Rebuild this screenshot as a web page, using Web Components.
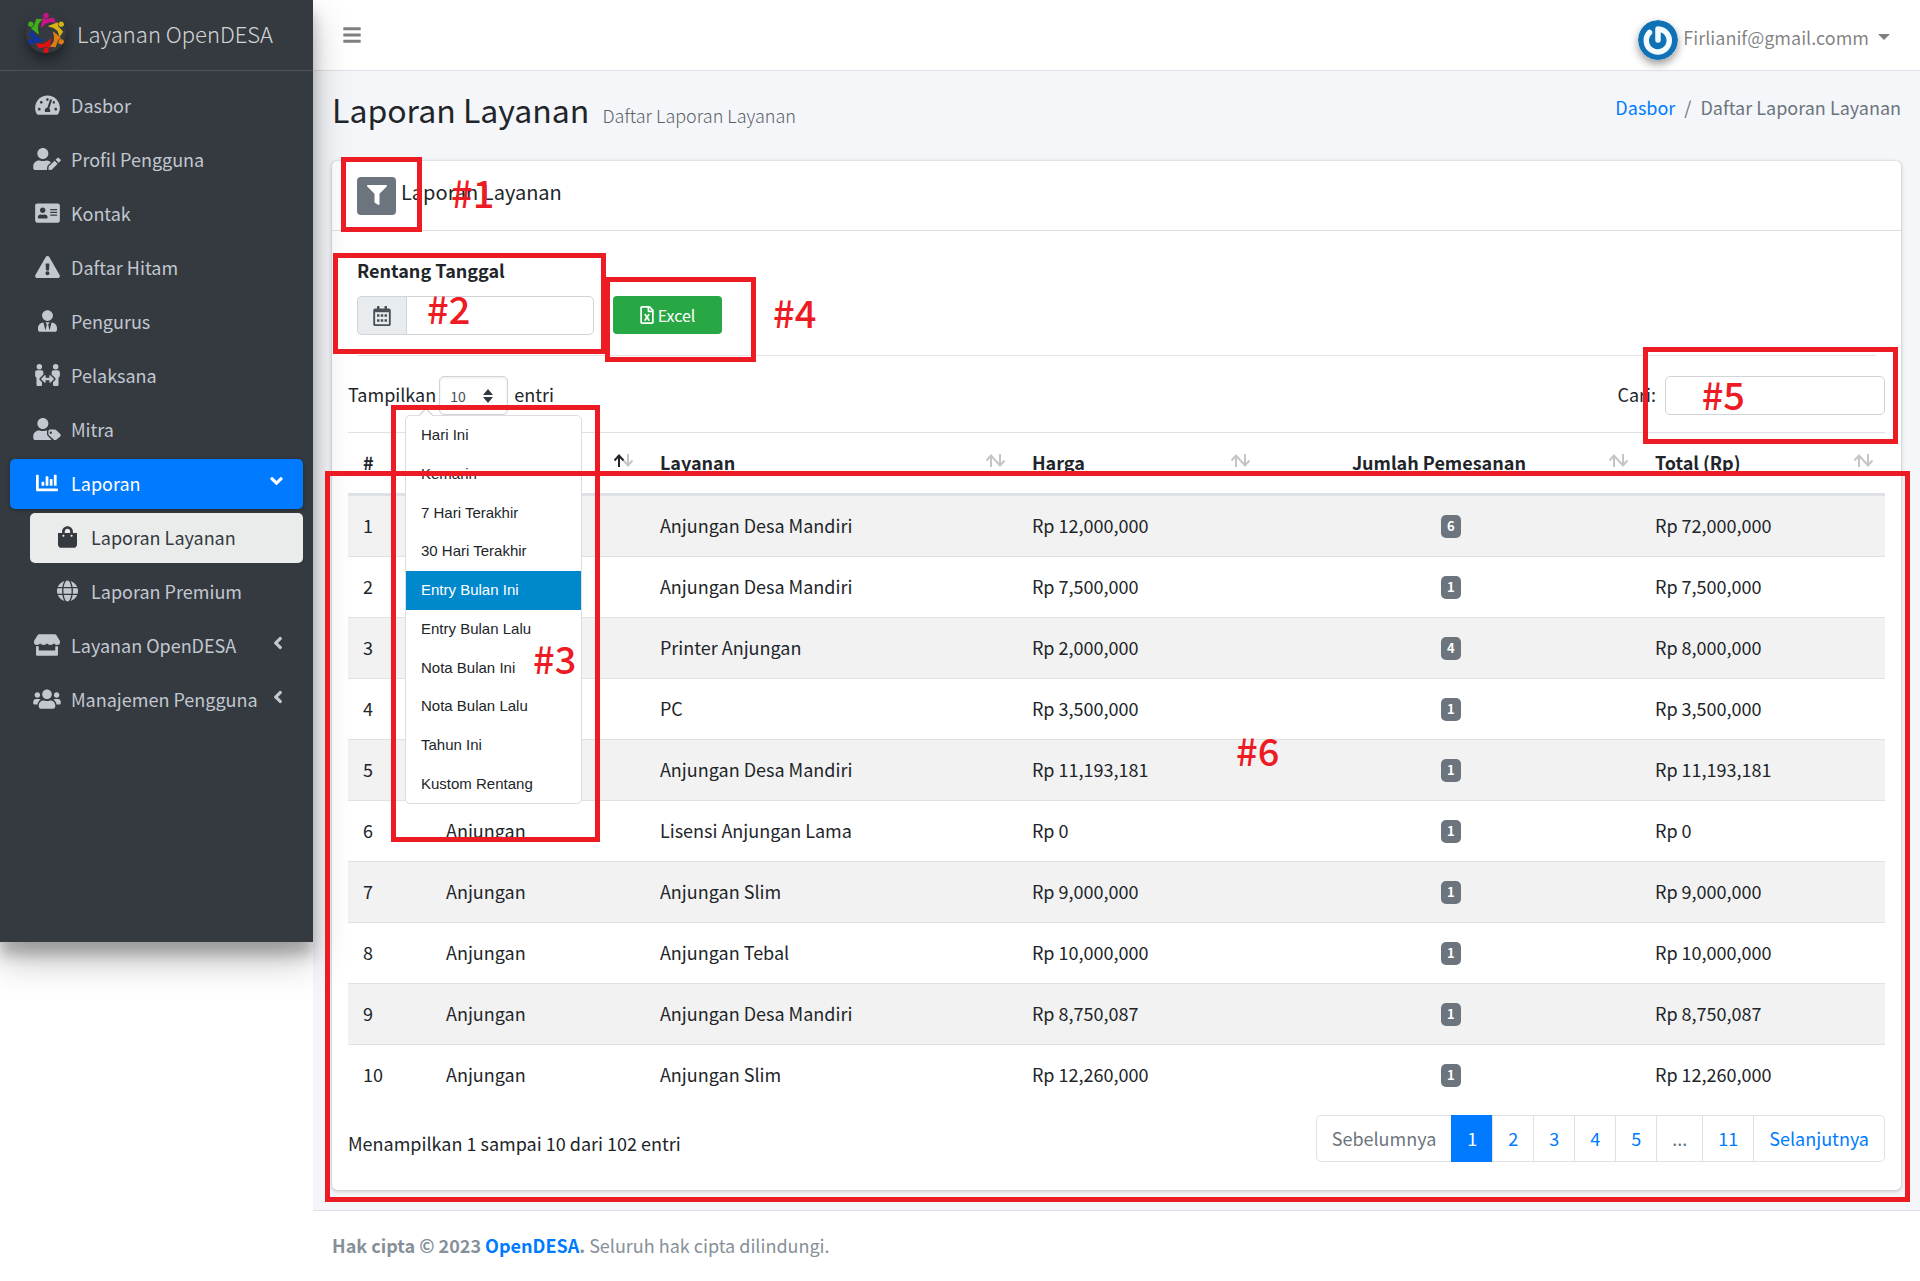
<!DOCTYPE html>
<html lang="id">
<head>
<meta charset="utf-8">
<title>Laporan Layanan</title>
<style>
  html, body { margin: 0; }
  body {
    font: 400 18px/30px "Noto Sans CJK SC", "Noto Sans", sans-serif;
    color: #212529;
    background: #fff;
    position: relative;
    --line: #dee2e6;
    --blue: #007bff;
    --grey: #6c757d;
    --mark: #ed1c24;
  }
</style>
</head>
<body>
<app-shell>
  <side-bar slot="sidebar">
    <nav-item icon="gauge">Dasbor</nav-item>
    <nav-item icon="userEdit">Profil Pengguna</nav-item>
    <nav-item icon="card">Kontak</nav-item>
    <nav-item icon="warning">Daftar Hitam</nav-item>
    <nav-item icon="userTie">Pengurus</nav-item>
    <nav-item icon="people">Pelaksana</nav-item>
    <nav-item icon="userTag">Mitra</nav-item>
    <nav-item icon="chart" active tree="open">Laporan</nav-item>
    <nav-item icon="bag" sub current>Laporan Layanan</nav-item>
    <nav-item icon="globe" sub>Laporan Premium</nav-item>
    <nav-item icon="store" tree="closed">Layanan OpenDESA</nav-item>
    <nav-item icon="users" tree="closed">Manajemen Pengguna</nav-item>
  </side-bar>
  <top-bar slot="top">Firlianif@gmail.comm</top-bar>
  <page-header>
    Laporan Layanan
    <span slot="sub">Daftar Laporan Layanan</span>
    <span slot="crumb">Daftar Laporan Layanan</span>
  </page-header>
  <report-card>
    <range-filter slot="filter"></range-filter>
    <table-tools></table-tools>
    <report-table></report-table>
    <table-foot></table-foot>
  </report-card>
  <page-footer slot="footer"></page-footer>
</app-shell>

<callout-box style="left:341px;top:157px;width:81px;height:75px"></callout-box>
<callout-box style="left:333px;top:253px;width:273px;height:101px"></callout-box>
<callout-box style="left:605px;top:277px;width:151px;height:85px"></callout-box>
<callout-box style="left:391px;top:405px;width:209px;height:437px"></callout-box>
<callout-box style="right:22px;top:347px;width:255px;height:97px"></callout-box>
<callout-box style="left:325px;right:10px;top:471px;height:731px"></callout-box>
<callout-label style="left:451px;top:172px">#1</callout-label>
<callout-label style="left:427px;top:288px">#2</callout-label>
<callout-label style="left:533px;top:638px">#3</callout-label>
<callout-label style="left:773px;top:292px">#4</callout-label>
<callout-label style="right:175px;top:374px">#5</callout-label>
<callout-label style="left:1236px;top:730px">#6</callout-label>

<script>
const user = 'M224 256c70.700 0 128-57.300 128-128S294.700 0 224 0 96 57.300 96 128s57.300 128 128 128z';
const ICONS = {
  gauge: [576, '<path d="M288 32C128.940 32 0 160.940 0 320c0 52.800 14.250 102.260 39.060 144.800 5.610 9.620 16.300 15.200 27.440 15.200h443c11.140 0 21.830-5.580 27.440-15.200C561.750 422.260 576 372.800 576 320c0-159.060-128.940-288-288-288zm0 64c14.710 0 26.580 10.130 30.320 23.650-1.110 2.260-2.640 4.230-3.450 6.670l-9.220 27.670c-5.130 3.490-10.970 6.010-17.640 6.010-17.670 0-32-14.330-32-32S270.330 96 288 96zM96 384c-17.670 0-32-14.330-32-32s14.330-32 32-32 32 14.330 32 32-14.330 32-32 32zm48-160c-17.670 0-32-14.330-32-32s14.330-32 32-32 32 14.330 32 32-14.330 32-32 32zm246.770-72.410l-61.330 184C343.130 347.330 352 364.540 352 384c0 11.720-3.380 22.550-8.880 32H232.880c-5.500-9.450-8.880-20.280-8.880-32 0-33.940 26.500-61.430 59.900-63.590l61.340-184.010c4.170-12.560 17.730-19.450 30.360-15.170 12.570 4.190 19.350 17.790 15.170 30.360zm14.660 57.200l15.520-46.550c3.470-1.290 7.130-2.230 11.050-2.230 17.670 0 32 14.330 32 32s-14.330 32-32 32c-11.380-.01-20.890-6.280-26.570-15.220zM480 384c-17.670 0-32-14.330-32-32s14.330-32 32-32 32 14.330 32 32-14.330 32-32 32z"/>'],
  userEdit: [640, `<path d="${user}m89.600 32h-16.700c-22.200 10.200-46.900 16-72.900 16s-50.600-5.800-72.900-16h-16.700C60.200 288 0 348.200 0 422.400V464c0 26.500 21.500 48 48 48h274.900c-2.400-6.800-3.400-14-2.600-21.300l6.800-60.900 1.200-11.100 7.900-7.900 77.300-77.300c-24.500-27.700-60-45.500-99.900-45.500zm45.300 145.300l-6.800 61c-1.100 10.200 7.500 18.800 17.600 17.600l60.900-6.800 137.900-137.900-71.700-71.700-137.900 137.800zM633 268.900L595.100 231c-9.300-9.300-24.500-9.300-33.800 0l-37.800 37.800-4.100 4.100 71.800 71.700 41.800-41.800c9.300-9.400 9.300-24.500 0-33.900z"/>`],
  card: [576, '<path fill-rule="evenodd" d="M528 32H48C21.500 32 0 53.500 0 80v352c0 26.500 21.500 48 48 48h480c26.500 0 48-21.500 48-48V80c0-26.500-21.500-48-48-48zm-352 96c35.300 0 64 28.700 64 64s-28.700 64-64 64-64-28.700-64-64 28.700-64 64-64zm112 236.800c0 10.600-10 19.200-22.400 19.200H86.400C74 384 64 375.400 64 364.800v-19.200c0-31.800 30.100-57.600 67.200-57.600h5c12.300 5.100 25.700 8 39.800 8s27.600-2.900 39.800-8h5c37.100 0 67.200 25.800 67.200 57.600zM352 288h160v32H352zm0-64h160v32H352zm0-64h160v32H352z"/>'],
  warning: [576, '<path d="M569.517 440.013C587.975 472.007 564.806 512 527.940 512H48.054c-36.937 0-59.999-40.055-41.577-71.987L246.423 23.985c18.467-32.009 64.720-31.951 83.154 0l239.940 416.028zM288 354c-25.405 0-46 20.595-46 46s20.595 46 46 46 46-20.595 46-46-20.595-46-46-46zm-43.673-165.346l7.418 136c.347 6.364 5.609 11.346 11.982 11.346h48.546c6.373 0 11.635-4.982 11.982-11.346l7.418-136c.375-6.874-5.098-12.654-11.982-12.654h-63.383c-6.884 0-12.356 5.780-11.981 12.654z"/>'],
  userTie: [448, `<path d="${user}m95.800 32.600L272 480l-32-136 32-56h-96l32 56-32 136-47.800-191.400C56.900 292 0 350.300 0 422.400V464c0 26.500 21.500 48 48 48h352c26.500 0 48-21.500 48-48v-41.600c0-72.100-56.900-130.400-128.200-133.800z"/>`],
  people: [576, '<circle cx="98" cy="64" r="64"/><circle cx="478" cy="64" r="64"/><path d="M48 144h96c26 0 48 22 48 48v50l-82 82c-14 14-14 34 0 48l50 50v58c0 18-14 32-32 32H64c-18 0-32-14-32-32V320c-19-11-32-30-32-52v-76c0-26 22-48 48-48zM432 144h96c26 0 48 22 48 48v76c0 22-13 41-32 52v160c0 18-14 32-32 32h-64c-18 0-32-14-32-32v-58l50-50c14-14 14-34 0-48l-82-82v-50c0-26 22-48 48-48z"/><path d="M232 258c8 0 13 6 13 14v46h86v-46c0-12 14-19 23-10l78 76c6 6 6 14 0 20l-78 76c-9 9-23 2-23-10v-46h-86v46c0 12-14 19-23 10l-78-76c-6-6-6-14 0-20l78-76c3-3 6-4 10-4z"/>'],
  userTag: [640, `<path d="${user}m89.600 32h-16.700c-22.200 10.200-46.900 16-72.900 16s-50.600-5.800-72.900-16h-16.700C60.200 288 0 348.200 0 422.400V464c0 26.500 21.500 48 48 48h352c9 0 17-3 24-7l-78-78c-14-14-26-35-26-60v-79z"/><path fill-rule="evenodd" d="M392 270h112c12 0 24 5 33 14l91 91c16 16 16 40 0 56l-92 74c-16 14-40 14-56 0l-114-101c-9-9-14-21-14-33V310c0-22 18-40 40-40zm16 46a27 27 0 1 0 .1 54 27 27 0 1 0-.1-54z"/>`],
  chart: [512, '<path d="M332.800 320h38.400c6.400 0 12.800-6.400 12.800-12.800V172.800c0-6.400-6.400-12.800-12.800-12.800h-38.400c-6.400 0-12.800 6.400-12.800 12.800v134.400c0 6.400 6.400 12.800 12.800 12.800zm96 0h38.400c6.400 0 12.800-6.400 12.800-12.800V76.800c0-6.400-6.400-12.800-12.800-12.800h-38.400c-6.400 0-12.800 6.400-12.800 12.800v230.400c0 6.400 6.400 12.800 12.800 12.800zm-288 0h38.400c6.400 0 12.800-6.400 12.800-12.800v-70.400c0-6.400-6.400-12.800-12.800-12.800h-38.400c-6.400 0-12.800 6.400-12.800 12.800v70.400c0 6.400 6.400 12.800 12.800 12.800zm96 0h38.400c6.400 0 12.800-6.400 12.800-12.800V108.800c0-6.400-6.400-12.800-12.800-12.800h-38.400c-6.400 0-12.800 6.400-12.800 12.800v198.400c0 6.400 6.400 12.800 12.800 12.800zM496 384H64V80c0-8.840-7.160-16-16-16H16C7.160 64 0 71.160 0 80v336c0 17.670 14.330 32 32 32h464c8.840 0 16-7.160 16-16v-32c0-8.840-7.160-16-16-16z"/>'],
  bag: [448, '<path d="M352 160v-32C352 57.420 294.579 0 224 0 153.420 0 96 57.420 96 128v32H0v272c0 44.183 35.817 80 80 80h288c44.183 0 80-35.817 80-80V160h-96zm-192-32c0-35.290 28.710-64 64-64s64 28.710 64 64v32H160v-32zm160 120c-13.255 0-24-10.745-24-24s10.745-24 24-24 24 10.745 24 24-10.745 24-24 24zm-192 0c-13.255 0-24-10.745-24-24s10.745-24 24-24 24 10.745 24 24-10.745 24-24 24z"/>'],
  globe: [496, '<path d="M336.500 160C322 70.700 287.800 8 248 8s-74 62.700-88.500 152h177zM152 256c0 22.200 1.200 43.500 3.300 64h185.300c2.100-20.500 3.300-41.800 3.300-64s-1.200-43.500-3.300-64H155.300c-2.100 20.500-3.300 41.800-3.300 64zm324.700-96c-28.600-67.900-86.500-120.400-158-141.600 24.400 33.800 41.200 84.700 50 141.600h108zM177.200 18.400C105.800 39.600 47.800 92.100 19.300 160h108c8.700-56.900 25.500-107.800 49.900-141.600zM487.400 192H372.700c2.100 21 3.300 42.500 3.300 64s-1.200 43-3.300 64h114.600c5.500-20.500 8.600-41.800 8.600-64s-3.100-43.500-8.500-64zM120 256c0-21.500 1.200-43 3.300-64H8.600C3.200 212.500 0 233.800 0 256s3.200 43.500 8.600 64h114.600c-2-21-3.200-42.500-3.200-64zm39.500 96c14.500 89.300 48.700 152 88.500 152s74-62.700 88.500-152h-177zm159.300 141.600c71.400-21.200 129.400-73.700 158-141.600h-108c-8.800 56.900-25.600 107.800-50 141.600zM19.300 352c28.600 67.900 86.500 120.400 158 141.600-24.400-33.800-41.200-84.700-50-141.600h-108z"/>'],
  store: [616, '<path d="M120 0h376c12 0 22 6 28 16l78 124c36 58 4 116-56 116-34 0-58-16-74-40-16 24-44 40-82 40s-66-16-82-40c-16 24-44 40-82 40s-66-16-82-40c-16 24-40 40-74 40C10 256-22 198 14 140L92 16c6-10 16-16 28-16z"/><path d="M48 284c20 6 44 6 64 0v100h392V284c20 6 44 6 64 0v196c0 18-14 32-32 32H80c-18 0-32-14-32-32z"/>'],
  users: [640, '<path d="M96 224c35.300 0 64-28.700 64-64s-28.700-64-64-64-64 28.700-64 64 28.700 64 64 64zm448 0c35.300 0 64-28.700 64-64s-28.700-64-64-64-64 28.700-64 64 28.700 64 64 64zm32 32h-64c-17.600 0-33.500 7.100-45.100 18.600 40.300 22.100 68.900 62 75.100 109.400h66c17.700 0 32-14.300 32-32v-32c0-35.300-28.700-64-64-64zm-256 0c61.900 0 112-50.100 112-112S381.900 32 320 32 208 82.100 208 144s50.100 112 112 112zm76.800 32h-8.300c-20.800 10-43.900 16-68.500 16s-47.600-6-68.500-16h-8.300C179.600 288 128 339.600 128 403.200V432c0 26.500 21.500 48 48 48h288c26.500 0 48-21.500 48-48v-28.800c0-63.600-51.600-115.200-115.200-115.200zm-223.700-13.400C161.500 263.100 145.600 256 128 256H64c-35.300 0-64 28.700-64 64v32c0 17.700 14.300 32 32 32h65.900c6.300-47.400 34.900-87.300 75.200-109.400z"/>'],
  left: [256, '<path d="M31.700 239l136-136c9.400-9.400 24.600-9.400 33.900 0l22.600 22.600c9.400 9.400 9.400 24.600 0 33.900L127.900 256l96.400 96.400c9.400 9.400 9.400 24.600 0 33.900L201.700 409c-9.400 9.400-24.600 9.400-33.900 0l-136-136c-9.500-9.400-9.500-24.600-.1-34z"/>'],
  down: [320, '<path d="M143 352.300L7 216.300c-9.400-9.400-9.400-24.600 0-33.900l22.600-22.600c9.400-9.400 24.600-9.400 33.900 0l96.400 96.400 96.400-96.400c9.400-9.400 24.600-9.400 33.900 0l22.600 22.600c9.400 9.400 9.400 24.600 0 33.900l-136 136c-9.200 9.400-24.400 9.400-33.800 0z"/>'],
  bars: [448, '<path d="M16 132h416c9 0 16-7 16-16V76c0-9-7-16-16-16H16C7 60 0 67 0 76v40c0 9 7 16 16 16zm0 160h416c9 0 16-7 16-16v-40c0-9-7-16-16-16H16c-9 0-16 7-16 16v40c0 9 7 16 16 16zm0 160h416c9 0 16-7 16-16v-40c0-9-7-16-16-16H16c-9 0-16 7-16 16v40c0 9 7 16 16 16z"/>'],
  filter: [512, '<path d="M487.976 0H24.028C2.710 0-8.047 25.866 7.058 40.971L192 225.941V432c0 7.831 3.821 15.170 10.237 19.662l80 55.980C298.020 518.690 320 507.493 320 487.980V225.941l184.947-184.970C520.021 25.896 509.338 0 487.976 0z"/>'],
  calendar: [448, '<path fill-rule="evenodd" d="M400 64h-48V12c0-7-5-12-12-12h-40c-7 0-12 5-12 12v52H160V12c0-7-5-12-12-12h-40c-7 0-12 5-12 12v52H48C21.500 64 0 85.500 0 112v352c0 26.500 21.500 48 48 48h352c26.500 0 48-21.500 48-48V112c0-26.500-21.500-48-48-48zM48 160h352v304H48zM96 208h64v64H96zm96 0h64v64h-64zm96 0h64v64h-64zM96 336h64v64H96zm96 0h64v64h-64zm96 0h64v64h-64z"/>'],
  excel: [384, '<path fill-rule="evenodd" d="M370 98L286 14c-9-9-21-14-34-14H48C21.500 0 0 21.500 0 48v416c0 26.500 21.500 48 48 48h288c26.500 0 48-21.500 48-48V132c0-13-5-25-14-34zM256 52l76 76h-76zM336 464H48V48h160v104c0 13 11 24 24 24h104zM260 224h-28c-5 0-9 2-11 6-18 34-22 42-29 58-13-29-7-17-29-58-2-4-6-6-11-6h-28c-10 0-16 11-10 20l46 76-46 76c-6 9 0 20 10 20h28c5 0 9-2 11-6 22-40 25-46 29-58 15 31 6 15 29 58 2 4 6 6 11 6h28c10 0 16-11 10-20l-46-76 46-76c6-9 0-20-10-20z"/>']
};
const icon = (name, h = 20) => {
  const [w, body] = ICONS[name];
  return `<svg width="${Math.round(w * h / 512)}" height="${h}" viewBox="0 0 ${w} 512" fill="currentColor" aria-hidden="true">${body}</svg>`;
};
const BASE = `<style>
  :host, *, *::before, *::after { box-sizing: border-box; }
  :host { display: block; }
  svg { display: block; flex: none; }
  a { color: var(--blue); text-decoration: none; }
  button, input, select { font: inherit; color: inherit; margin: 0; }
  button { border: 0; cursor: pointer; }
  input, select { border: 1px solid #ced4da; border-radius: 5px; background: #fff; height: 39px; }
</style>`;
const define = (tag, render) => customElements.define(tag, class extends HTMLElement {
  constructor() { super(); this.attachShadow({ mode: 'open' }); }
  connectedCallback() { this.shadowRoot.innerHTML = BASE + render(this); }
});

define('app-shell', () => `<style>
  :host { display: grid; grid-template-columns: 313px minmax(0, 1fr); align-items: start; }
  main { background: #f4f6f9; padding-bottom: 20px; }
</style>
<slot name="sidebar"></slot>
<div><slot name="top"></slot><main><slot></slot></main><slot name="footer"></slot></div>`);

const person = 'M-5-6L-3.500-15.500L0-14L7.500-15.500L10-10L4-11L-.500-9L-5-5z';
const logo = `<svg width="40" height="40" viewBox="-20 -20 40 40" aria-hidden="true">` +
  ['#c71585', '#d9b310', '#e07b10', '#dd1111', '#1035a0', '#3fae1a'].map((c, i) =>
    `<g fill="${c}" transform="rotate(${i * 60})"><circle cy="-17.500" r="2.700"/><path d="${person}"/></g>`).join('') + '</svg>';
define('side-bar', () => `<style>
  :host { background: #343a40; min-height: 942px; position: relative; z-index: 1;
    box-shadow: 0 18px 35px rgba(0,0,0,.25), 0 13px 13px rgba(0,0,0,.22); }
  .brand { display: flex; align-items: center; gap: 11px; height: 71px; padding: 0 0 4px 26px;
    border-bottom: 1px solid #4b545c; color: rgba(255,255,255,.8); font-size: 22px; font-weight: 300; white-space: nowrap; }
  .logo { border-radius: 50%; box-shadow: 0 8px 16px rgba(0,0,0,.3), 0 6px 6px rgba(0,0,0,.15); }
  nav { display: flex; flex-direction: column; gap: 4px; padding: 10px; }
</style>
<a class="brand" href="#"><span class="logo">${logo}</span>Layanan OpenDESA</a>
<nav><slot></slot></nav>`);

define('nav-item', el => {
  const tree = el.getAttribute('tree');
  return `<style>
  a { display: flex; align-items: center; height: 50px; padding: 0 20px 2px 18px; border-radius: 5px; color: #c2c7d0; white-space: nowrap; }
  :host([sub]) { padding-left: 20px; }
  :host([active]) a { background: var(--blue); color: #fff; box-shadow: 0 1px 4px rgba(0,0,0,.3); }
  :host([current]) a { background: #eaeceb; color: #343a40; }
  .i { width: 38px; margin-right: 5px; display: flex; justify-content: center; padding-bottom: 1px; }
  .t { margin-left: auto; padding-bottom: 4px; }
</style>
<a href="#"><span class="i">${icon(el.getAttribute('icon'), 22)}</span><slot></slot>${tree ? `<span class="t">${icon(tree === 'open' ? 'down' : 'left')}</span>` : ''}</a>`;
});

define('top-bar', () => `<style>
  :host { display: flex; justify-content: space-between; height: 71px; background: #fff; border-bottom: 1px solid var(--line); color: rgba(0,0,0,.5); }
  button { background: none; padding: 0 30px 1px; }
  a { display: flex; align-items: flex-start; gap: 5px; color: inherit; padding: 20px 30px 0 0; line-height: 34px; }
  .av { border-radius: 50%; box-shadow: 0 4px 8px rgba(0,0,0,.4); }
  .c { border: 6px solid transparent; border-top-color: currentColor; border-bottom: 0; margin: 14px 0 0 4px; }
</style>
<button aria-label="Menu">${icon('bars')}</button>
<a href="#"><svg class="av" width="40" height="40" viewBox="0 0 40 40" aria-hidden="true"><circle cx="20" cy="20" r="20" fill="#1072b5"/><path d="M20 20V9A11.500 11.500 0 1 1 11.500 12.500" fill="none" stroke="#f3fbff" stroke-width="5.500" stroke-linecap="round" stroke-linejoin="round"/></svg><slot></slot><span class="c"></span></a>`);

define('page-header', () => `<style>
  :host { display: flex; justify-content: space-between; align-items: flex-start; padding: 16px 19px 30px; }
  h1 { margin: 0; font-size: 32px; line-height: 44px; font-weight: 400; }
  small { font-size: 18px; line-height: 20px; font-weight: 300; color: #5a6268; margin-left: 6px; }
  ol { list-style: none; display: flex; gap: 9px; margin: 0; padding: 5px 0 0; color: var(--grey); }
</style>
<h1><slot></slot><small><slot name="sub"></slot></small></h1>
<ol><li><a href="#">Dasbor</a></li><li>/</li><li><slot name="crumb"></slot></li></ol>`);

define('report-card', () => `<style>
  :host { margin: 0 19px; background: #fff; border-radius: 5px; box-shadow: 0 0 1px rgba(0,0,0,.25), 0 1px 4px rgba(0,0,0,.22); }
  header { display: flex; align-items: center; gap: 5px; padding: 16px 25px 15px; border-bottom: 1px solid #dfdfdf; font-size: 20px; }
  header span { padding-bottom: 8px; }
  button { width: 39px; height: 38px; border-radius: 4px; background: var(--grey); color: #fff; display: grid; place-items: center; padding: 0 0 2px; }
  section { padding: 0 16px 28px; }
</style>
<header><button aria-label="Filter">${icon('filter')}</button><span>Laporan Layanan</span></header>
<slot name="filter"></slot>
<section><slot></slot></section>`);

const ranges = ['Hari Ini', 'Kemarin', '7 Hari Terakhir', '30 Hari Terakhir', 'Entry Bulan Ini', 'Entry Bulan Lalu', 'Nota Bulan Ini', 'Nota Bulan Lalu', 'Tahun Ini', 'Kustom Rentang'];
define('range-filter', () => `<style>
  :host { margin: 0 25px; padding: 24px 0 20px; border-bottom: 1px solid #e4e4e4; position: relative; }
  label { display: block; font-weight: 700; margin-bottom: 11px; }
  .row { display: flex; gap: 19px; }
  .group { display: flex; width: 237px; }
  .addon { display: grid; place-items: center; width: 49px; border: 1px solid #ced4da; border-right: 0; border-radius: 5px 0 0 5px; background: #e9ecef; color: #495057; }
  input { flex: 1; min-width: 0; border-radius: 0 5px 5px 0; padding: 0 15px; }
  .excel { display: flex; align-items: center; justify-content: center; gap: 4px; width: 109px; height: 38px; padding: 0 0 1px; border-radius: 4px; background: #28a745; color: #fff; font-size: 16px; }
  .menu { position: absolute; z-index: 2; left: 48px; top: 184px; width: 177px; height: 389px; margin: 0; padding: 0; list-style: none;
    display: flex; flex-direction: column; background: #fff; border: 1px solid #ddd; border-radius: 5px; font: 15px "Liberation Sans", sans-serif; }
  .menu::before { content: ""; position: absolute; left: 15px; top: -6px; width: 10px; height: 10px; background: #fff; border: 1px solid #ccc; border-width: 1px 0 0 1px; transform: rotate(45deg); }
  li { flex: 1; display: flex; position: relative; }
  .menu button { width: 100%; text-align: left; padding: 0 15px 1px; background: none; }
  .menu .on { background: #08c; color: #fff; }
</style>
<label for="range">Rentang Tanggal</label>
<div class="row"><div class="group"><span class="addon">${icon('calendar')}</span><input id="range" type="text"></div>
<button class="excel">${icon('excel', 18)}Excel</button></div>
<ul class="menu">${ranges.map((r, i) => `<li><button${i === 4 ? ' class="on"' : ''}>${r}</button></li>`).join('')}</ul>`);

define('table-tools', () => `<style>
  :host { display: flex; justify-content: space-between; padding: 20px 0 17px; }
  div { display: flex; align-items: center; height: 39px; gap: 3px; }
  label, .unit { padding-bottom: 4px; }
  .unit { margin-left: 3px; }
  .len { display: grid; }
  .len > * { grid-area: 1 / 1; }
  .len svg { place-self: center end; margin-right: 15px; pointer-events: none; }
  select { appearance: none; width: 69px; padding: 0 10px; font-size: 14px; color: #495057; box-shadow: inset 0 1px 3px rgba(0,0,0,.08); }
  .find { gap: 9px; }
  input { width: 220px; padding: 0 10px; font-size: 16px; }
</style>
<div><label for="len">Tampilkan</label><span class="len"><select id="len"><option>10</option><option>25</option></select>
<svg width="10" height="14" viewBox="0 0 10 14" fill="#343a40" aria-hidden="true"><path d="M0 6L5 0L10 6zM0 8L5 14L10 8z"/></svg></span><span class="unit">entri</span></div>
<div class="find"><label for="find">Cari:</label><input id="find" type="search"></div>`);

const sort = (asc) => `<svg width="21" height="13" viewBox="0 0 21 13" fill="none" stroke="#c4c5c6" stroke-width="2" aria-hidden="true"><path d="M15 0V11M10.500 6.500L15 11.500L19.500 6.500"/><path${asc ? ' stroke="#212529"' : ''} d="M6 13V2M1.500 6.500L6 1.500L10.500 6.500"/></svg>`;
const rows = [['Anjungan Desa Mandiri', '12,000,000', 6, '72,000,000'], ['Anjungan Desa Mandiri', '7,500,000', 1, '7,500,000'], ['Printer Anjungan', '2,000,000', 4, '8,000,000'], ['PC', '3,500,000', 1, '3,500,000'], ['Anjungan Desa Mandiri', '11,193,181', 1, '11,193,181'], ['Lisensi Anjungan Lama', '0', 1, '0'], ['Anjungan Slim', '9,000,000', 1, '9,000,000'], ['Anjungan Tebal', '10,000,000', 1, '10,000,000'], ['Anjungan Desa Mandiri', '8,750,087', 1, '8,750,087'], ['Anjungan Slim', '12,260,000', 1, '12,260,000']];
define('report-table', () => `<style>
  table { width: 100%; table-layout: fixed; border-spacing: 0; }
  th, td { text-align: left; padding: 0 15px 2px; height: 61px; border-top: 1px solid var(--line); }
  th { font-weight: 700; height: 64px; border-bottom: 3px solid var(--line); }
  th > div { display: flex; align-items: center; justify-content: space-between; margin-right: -4px; }
  th svg { margin-bottom: 3px; }
  tbody tr:first-child td { border-top: 0; height: 60px; }
  tbody tr:nth-child(odd) { background: #f2f2f2; }
  th.mid span { flex: 1; text-align: center; padding-right: 7px; }
  td.mid { padding-bottom: 0; }
  .badge { display: block; width: 20px; height: 23px; margin: 0 auto; text-align: center; border-radius: 5px; background: var(--grey); color: #fff; font: 700 13px/22px "Noto Sans CJK SC", sans-serif; }
</style>
<table>
<colgroup><col style="width:5.400%"><col style="width:13.920%"><col style="width:24.200%"><col style="width:15.940%"><col style="width:24.600%"><col></colgroup>
<thead><tr><th>#</th><th><div><span>Kategori</span>${sort(true)}</div></th>${['Layanan', 'Harga', 'Jumlah Pemesanan', 'Total (Rp)'].map((h, i) => `<th${i === 2 ? ' class="mid"' : ''}><div><span>${h}</span>${sort()}</div></th>`).join('')}</tr></thead>
<tbody>${rows.map((r, i) => `<tr><td>${i + 1}</td><td>Anjungan</td><td>${r[0]}</td><td>Rp ${r[1]}</td><td class="mid"><span class="badge">${r[2]}</span></td><td>Rp ${r[3]}</td></tr>`).join('')}</tbody>
</table>`);

define('table-foot', () => `<style>
  :host { display: flex; justify-content: space-between; align-items: flex-start; padding-top: 10px; }
  p { margin: 0; padding-top: 13px; }
  ul { display: flex; margin: 0; padding: 0; list-style: none; }
  a { display: block; padding: 7px 15px 8px; border: 1px solid var(--line); margin-left: -1px; line-height: 30px; }
  li:first-child a { border-radius: 5px 0 0 5px; }
  li:last-child a { border-radius: 0 5px 5px 0; }
  .off { color: var(--grey); }
  .on { background: var(--blue); border-color: var(--blue); color: #fff; }
</style>
<p>Menampilkan 1 sampai 10 dari 102 entri</p>
<ul>${['Sebelumnya', '1', '2', '3', '4', '5', '...', '11', 'Selanjutnya'].map((t, i) => `<li><a href="#"${i === 1 ? ' class="on"' : i === 0 || i === 6 ? ' class="off"' : ''}>${t}</a></li>`).join('')}</ul>`);

define('page-footer', () => `<style>
  :host { background: #fff; border-top: 1px solid var(--line); padding: 19px 19px 21px; color: #869099; }
</style><strong>Hak cipta © 2023 <a href="#">OpenDESA</a>.</strong> Seluruh hak cipta dilindungi.`);

define('callout-box', () => `<style>:host { position: absolute; z-index: 5; border: 5px solid var(--mark); pointer-events: none; }</style>`);
define('callout-label', () => `<style>:host { position: absolute; z-index: 5; color: var(--mark); font-size: 38px; font-weight: 500; line-height: 40px; pointer-events: none; }</style><slot></slot>`);
</script>
</body>
</html>
